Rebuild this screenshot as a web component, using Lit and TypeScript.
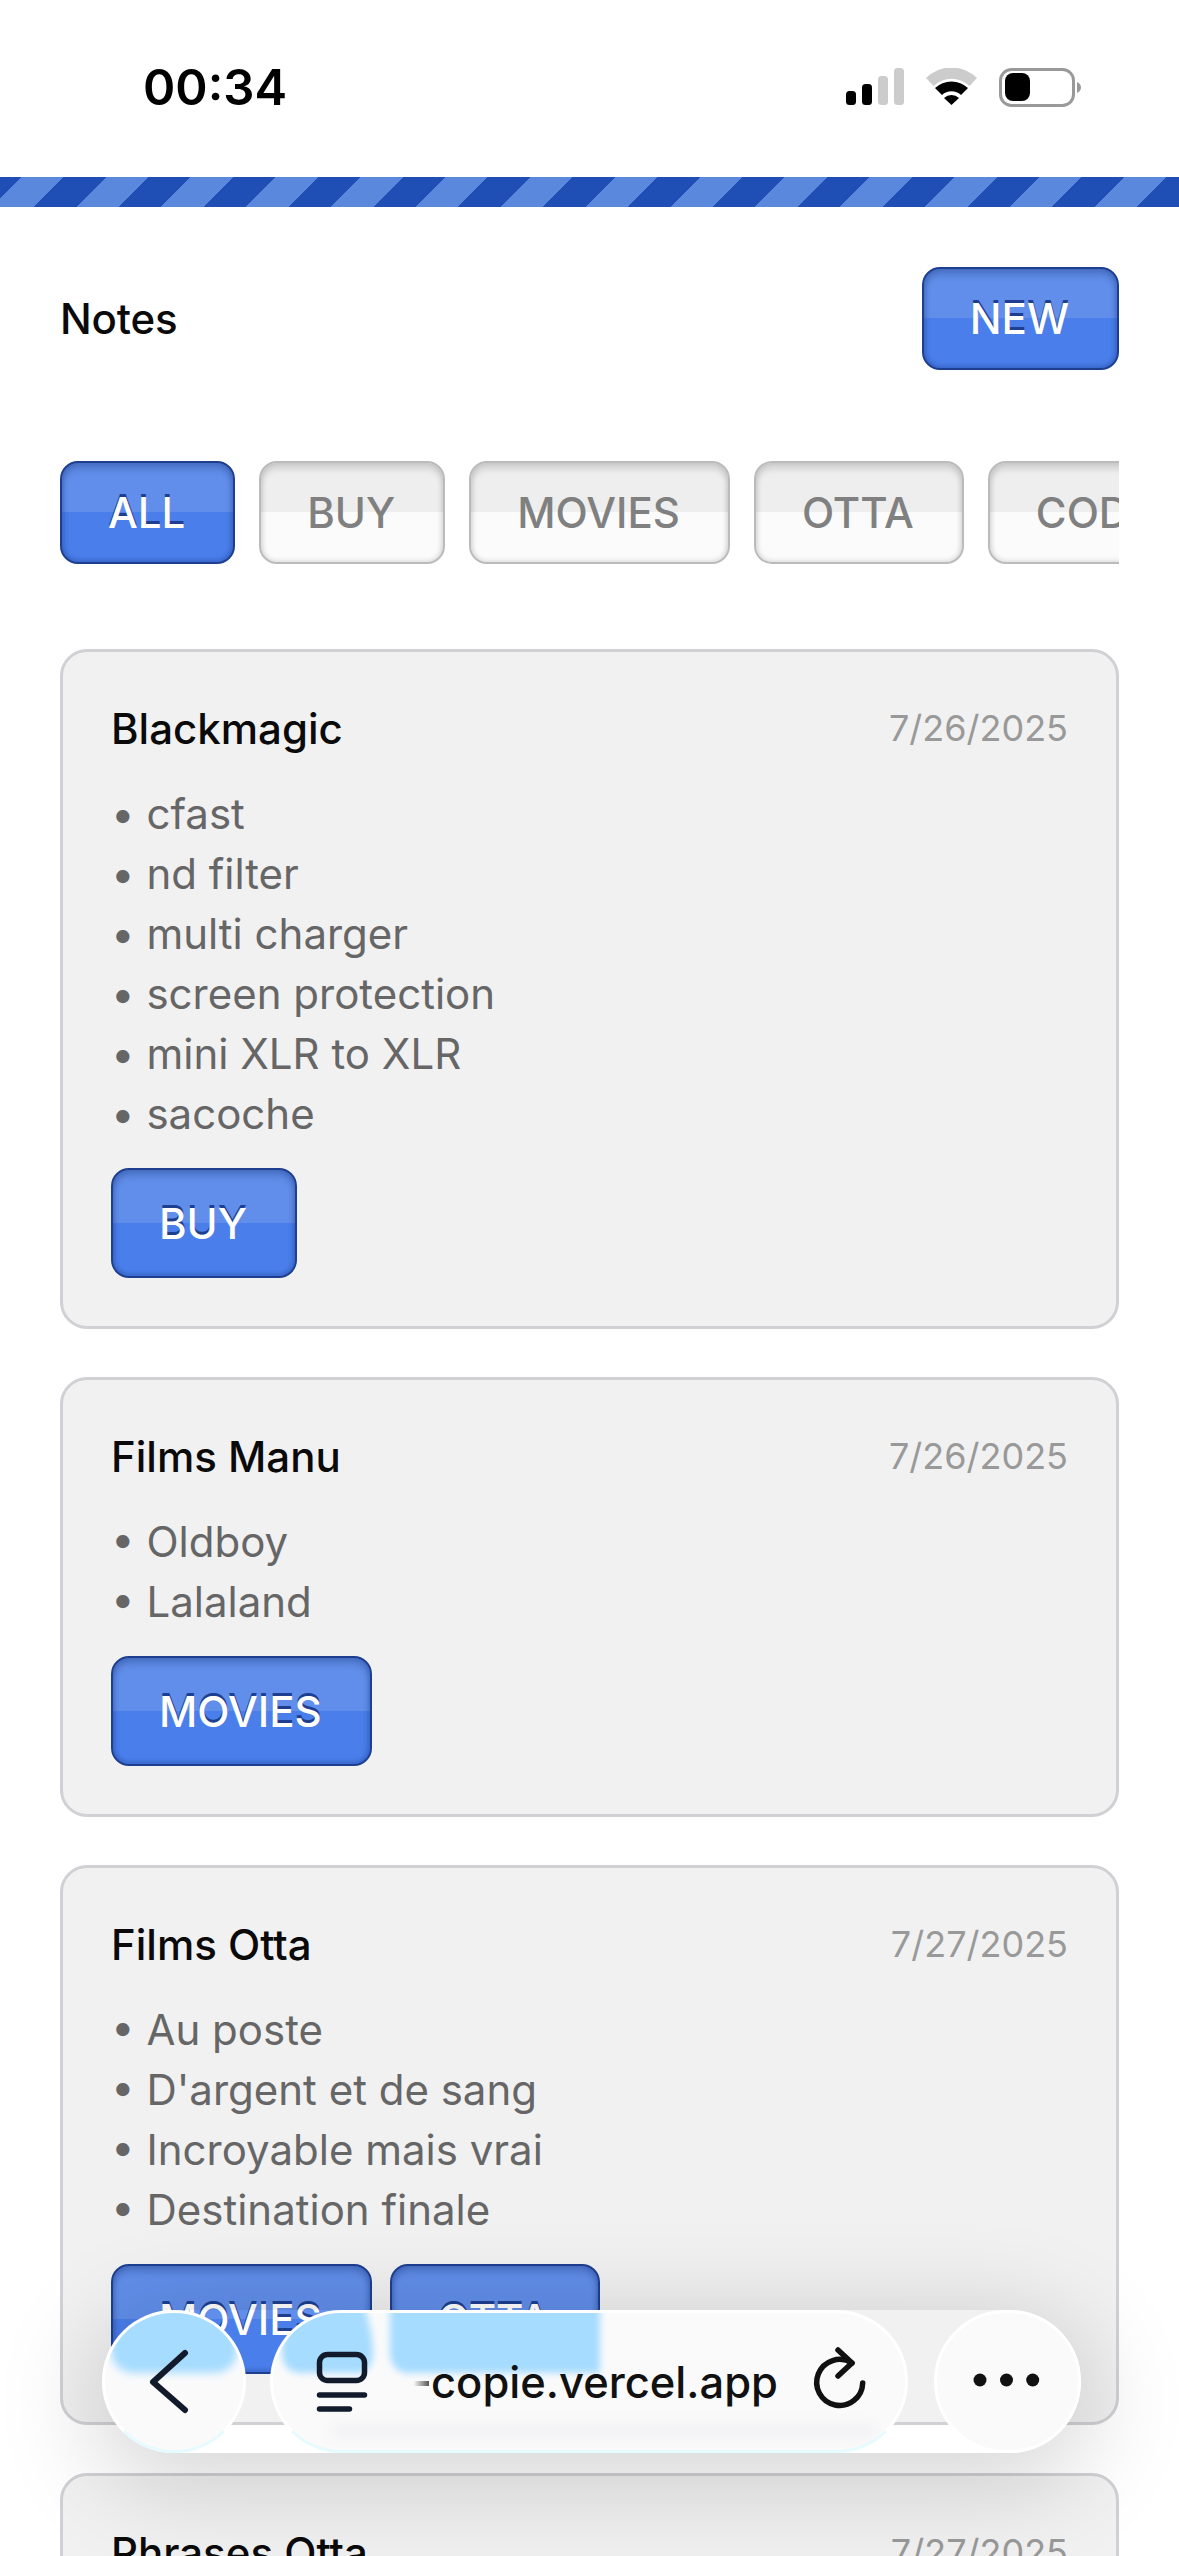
import { LitElement, html, css } from "lit";
import { customElement } from "lit/decorators.js";

const filters = ["ALL", "BUY", "MOVIES", "OTTA", "CODE"];

const notes = [
  { title: "Blackmagic", date: "7/26/2025", lines: ["cfast", "nd filter", "multi charger", "screen protection", "mini XLR to XLR", "sacoche"], tags: ["BUY"] },
  { title: "Films Manu", date: "7/26/2025", lines: ["Oldboy", "Lalaland"], tags: ["MOVIES"] },
  { title: "Films Otta", date: "7/27/2025", lines: ["Au poste", "D'argent et de sang", "Incroyable mais vrai", "Destination finale"], tags: ["MOVIES", "OTTA"] },
  { title: "Phrases Otta", date: "7/27/2025", lines: [], tags: [] },
];

@customElement("app-root")
export class AppRoot extends LitElement {
  static styles = css`
    :host {
      display: block;
      position: relative;
      width: 1179px;
      height: 2556px;
      overflow: hidden;
      background: #fff;
      font-family: Inter, "Liberation Sans", sans-serif;
    }
    .status {
      height: 177px;
      box-sizing: border-box;
      padding: 60px 98px 0 143px;
      display: flex;
      justify-content: space-between;
      align-items: flex-start;
    }
    .time {
      font-size: 49px;
      line-height: 56px;
      font-weight: 600;
      color: #000;
    }
    .status-icons {
      display: flex;
      margin-top: 8px;
      gap: 22px;
    }
    .status-icons svg {
      display: block;
    }
    .stripe {
      height: 30px;
      background: repeating-linear-gradient(135deg, #1f4fb5 0 15px, #5a88dc 15px 45px, #1f4fb5 45px 60px);
    }
    main {
      padding: 60px 60px 0;
    }
    .head {
      display: flex;
      justify-content: space-between;
      align-items: center;
      margin-bottom: 91px;
    }
    .head span {
      font-size: 42px;
      font-weight: 500;
      letter-spacing: -0.2px;
      color: #0a0a0a;
    }
    .btn {
      box-sizing: border-box;
      height: 103px;
      padding: 0 48px 0 46px;
      display: flex;
      align-items: center;
      flex: none;
      font-size: 42px;
      font-weight: 500;
      color: #fff;
      border: 2px solid #1e3f8f;
      border-radius: 18px;
      background: linear-gradient(#618eea 50%, #4a7eeb 50%);
      box-shadow: inset 0 6px 6px rgba(30, 60, 130, 0.3), inset 3px 0 4px rgba(30, 60, 130, 0.14), inset -3px 0 4px rgba(30, 60, 130, 0.14), inset 0 -3px 4px rgba(30, 60, 130, 0.18);
      text-shadow: 0 -3px 0 #1e3f8f;
    }
    .btn.off {
      color: #808080;
      border-color: #bbbbbb;
      background: linear-gradient(#eeeeee 50%, #fbfbfb 50%);
      box-shadow: inset 0 6px 6px rgba(0, 0, 0, 0.12), inset 3px 0 4px rgba(0, 0, 0, 0.05), inset -3px 0 4px rgba(0, 0, 0, 0.05), inset 0 -3px 4px rgba(0, 0, 0, 0.05);
      text-shadow: none;
    }
    .filters {
      display: flex;
      gap: 24px;
      overflow: hidden;
      margin-bottom: 85px;
    }
    .cards {
      display: flex;
      flex-direction: column;
      gap: 48px;
    }
    .card {
      border: 3px solid #d0d0d5;
      border-radius: 27px;
      background: #f1f1f2;
      padding: 48px;
    }
    .card-head {
      display: flex;
      justify-content: space-between;
      align-items: center;
      height: 56px;
      margin-bottom: 28px;
    }
    .title {
      font-size: 42px;
      font-weight: 500;
      color: #0a0a0a;
    }
    .date {
      font-size: 36px;
      color: #999999;
    }
    .line {
      font-size: 42px;
      line-height: 60px;
      color: #666666;
    }
    .tags {
      display: flex;
      gap: 18px;
      margin-top: 24px;
    }
    .tags .btn {
      height: 110px;
    }
    .shadow {
      position: absolute;
      left: 102px;
      top: 2310px;
      width: 979px;
      height: 143px;
      border-radius: 72px;
      box-shadow: 0 20px 100px 10px rgba(0, 0, 0, 0.17);
    }
    .bar {
      position: absolute;
      left: 102px;
      top: 2310px;
      display: flex;
      gap: 24px;
      height: 143px;
    }
    .glass {
      position: relative;
      overflow: hidden;
      box-sizing: border-box;
      height: 143px;
      border-radius: 72px;
      background: #fafafb;
      border: 3px solid #ffffff;
      border-bottom-color: #e6fbff;
    }
    .back {
      width: 144px;
    }
    .pill {
      width: 638px;
    }
    .more {
      width: 147px;
      margin-left: 2px;
      border-bottom-color: #ffffff;
    }
    .base-strip {
      position: absolute;
      left: 60px;
      right: 30px;
      top: 112px;
      height: 12px;
      background: #f1f1f3;
      filter: blur(6px);
    }
    .glass svg {
      position: absolute;
      left: 0;
      top: 0;
    }
    .url {
      position: absolute;
      left: 140px;
      top: 39px;
      font-size: 43.5px;
      line-height: 60px;
      font-weight: 500;
      color: #111111;
      white-space: nowrap;
    }
    .url i {
      display: inline-block;
      width: 16px;
      height: 5px;
      vertical-align: 12px;
      margin-right: 2px;
      background: linear-gradient(90deg, #ffffff, #555555);
    }
  `;

  renderStatus() {
    return html`
      <div class="status">
        <div class="time">00:34</div>
        <div class="status-icons">
          <svg width="58" height="37" viewBox="0 0 58 37">
            <rect x="0" y="23" width="10" height="14" rx="3.5" fill="#000" />
            <rect x="16" y="16" width="10" height="21" rx="3.5" fill="#000" />
            <rect x="32" y="8" width="10" height="29" rx="3.5" fill="#cccccc" />
            <rect x="48" y="0" width="10" height="37" rx="3.5" fill="#cccccc" />
          </svg>
          <svg width="51" height="37" viewBox="0 0 51 37">
            <path d="M0 10A36 36 0 0 1 51 10L43.5 18A26 26 0 0 0 7.5 18Z" fill="#cccccc" />
            <path d="M9 20A24 24 0 0 1 42 20L35 27A14 14 0 0 0 16 27Z" fill="#000" />
            <path d="M18 30A11 11 0 0 1 33 30L25.5 37Z" fill="#000" />
          </svg>
          <svg width="82" height="39" viewBox="0 0 82 39">
            <rect x="1.5" y="1.5" width="73" height="36" rx="11" fill="none" stroke="#999999" stroke-width="3" />
            <rect x="6" y="5" width="25" height="28" rx="8" fill="#000" />
            <path d="M78 14C80.5 15 82 17 82 19.5C82 22 80.5 24 78 25Z" fill="#999999" />
          </svg>
        </div>
      </div>
    `;
  }

  renderCard(n: (typeof notes)[number]) {
    return html`
      <section class="card">
        <div class="card-head">
          <span class="title">${n.title}</span>
          <span class="date">${n.date}</span>
        </div>
        ${n.lines.map((l) => html`<div class="line">• ${l}</div>`)}
        ${n.tags.length
          ? html`<div class="tags">${n.tags.map((t) => html`<span class="btn">${t}</span>`)}</div>`
          : ""}
      </section>
    `;
  }

  renderBar() {
    return html`
      <div class="shadow"></div>
      <div class="bar">
        <div class="glass back">
          <svg width="138" height="137" viewBox="0 0 138 137" fill="none" stroke="#111b2b" stroke-width="6" stroke-linecap="round" stroke-linejoin="round">
            <defs>
              <filter id="soft-back" x="-20%" y="-20%" width="140%" height="140%"><feGaussianBlur stdDeviation="4" /></filter>
            </defs>
            <rect x="6" y="-30" width="126" height="90" rx="22" fill="#a6dcff" stroke="none" filter="url(#soft-back)" />
            <path d="M80 40L48 69L80 97" />
          </svg>
        </div>
        <div class="glass pill">
          <div class="base-strip"></div>
          <svg width="632" height="137" viewBox="0 0 632 137" fill="none" stroke="#111b2b" stroke-width="5.5" stroke-linecap="round" stroke-linejoin="round">
            <defs>
              <filter id="soft-pill" x="-20%" y="-20%" width="140%" height="140%"><feGaussianBlur stdDeviation="3.5" /></filter>
            </defs>
            <path d="M9 -20H86C94 0 100 20 100 40C100 52 94 60 84 60H28C16 60 9 52 9 40Z" fill="#a6dcff" stroke="none" filter="url(#soft-pill)" />
            <path d="M117 -20H327V60H135C124 60 117 52 117 40Z" fill="#a6dcff" stroke="none" filter="url(#soft-pill)" />
            <rect x="46.5" y="41.5" width="45" height="26" rx="8" />
            <path d="M46.5 82H91.5M46.5 96H76.5" />
            <path d="M589.7 70A23 23 0 1 1 579 50" stroke="#111111" />
            <path d="M565 37L579 50L565 63" stroke="#111111" />
          </svg>
          <span class="url"><i></i>copie.vercel.app</span>
        </div>
        <div class="glass more">
          <svg width="141" height="137" viewBox="0 0 141 137" fill="#111111">
            <circle cx="43" cy="67" r="6.5" />
            <circle cx="69.5" cy="67" r="6.5" />
            <circle cx="95.7" cy="67" r="6.5" />
          </svg>
        </div>
      </div>
    `;
  }

  render() {
    return html`
      ${this.renderStatus()}
      <div class="stripe"></div>
      <main>
        <div class="head">
          <span>Notes</span>
          <div class="btn">NEW</div>
        </div>
        <div class="filters">
          ${filters.map((f) => html`<div class="btn ${f === "ALL" ? "" : "off"}">${f}</div>`)}
        </div>
        <div class="cards">${notes.map((n) => this.renderCard(n))}</div>
      </main>
      ${this.renderBar()}
    `;
  }
}
